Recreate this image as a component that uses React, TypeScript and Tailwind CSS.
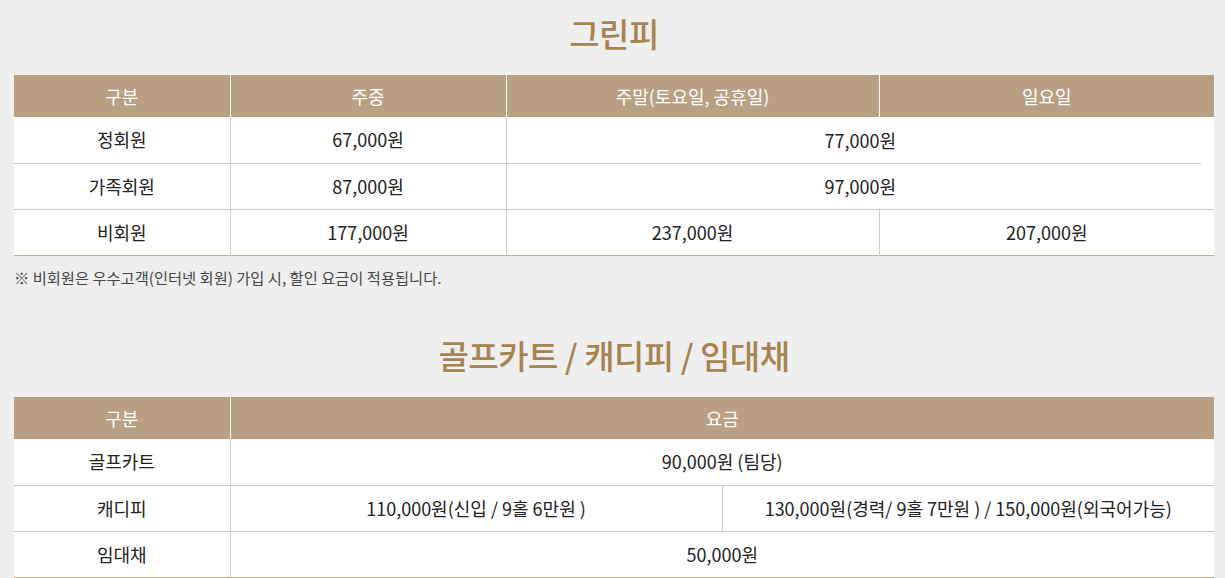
const FONT = "font-['Noto_Sans_CJK_KR','Noto_Sans',sans-serif]";

const th = "h-[42px] border-l border-white bg-[#b9a082] p-0 text-center text-[18px] font-normal text-white first:border-l-0";
const td = "h-[46px] border-l border-t border-[#cccccc] p-0 text-center text-[18px] text-[#222] first:border-l-0";

function Title({ children }: { children: React.ReactNode }) {
  return (
    <h2 className="flex h-[40px] items-center justify-center text-[33px] font-medium tracking-[-0.5px] text-[#a6834f]">
      {children}
    </h2>
  );
}

function GreenFee() {
  return (
    <section className="pt-[14px]">
      <Title>그린피</Title>
      <table className="mt-[21px] w-full table-fixed border-collapse border-b border-b-[#c9ad8a] bg-white">
        <colgroup>
          <col className="w-[216px]" />
          <col className="w-[276px]" />
          <col className="w-[373px]" />
          <col />
        </colgroup>
        <thead>
          <tr>
            <th className={th}>구분</th>
            <th className={th}>주중</th>
            <th className={th}>주말(토요일, 공휴일)</th>
            <th className={th}>일요일</th>
          </tr>
        </thead>
        <tbody>
          <tr>
            <td className={td + " border-t-0"}>정회원</td>
            <td className={td + " border-t-0"}>67,000원</td>
            <td className={td + " border-t-0"} colSpan={2}>77,000원</td>
          </tr>
          <tr>
            <td className={td}>가족회원</td>
            <td className={td}>87,000원</td>
            <td className={td + " border-t-0"} colSpan={2}>
              <div className="relative flex h-[46px] items-center justify-center">
                <span className="absolute left-0 right-[13px] top-0 h-px bg-[#cccccc]" />
                97,000원
              </div>
            </td>
          </tr>
          <tr>
            <td className={td}>비회원</td>
            <td className={td}>177,000원</td>
            <td className={td}>237,000원</td>
            <td className={td}>207,000원</td>
          </tr>
        </tbody>
      </table>
      <p className="mt-[11px] text-[15.3px] leading-[20px] text-[#444]">
        ※ 비회원은 우수고객(인터넷 회원) 가입 시, 할인 요금이 적용됩니다.
      </p>
    </section>
  );
}

function CartFee() {
  return (
    <section className="pt-[49px]">
      <Title>골프카트 / 캐디피 / 임대채</Title>
      <table className="mt-[21px] w-full table-fixed border-collapse border-b border-b-[#c9ad8a] bg-white">
        <colgroup>
          <col className="w-[216px]" />
          <col className="w-[492px]" />
          <col />
        </colgroup>
        <thead>
          <tr>
            <th className={th}>구분</th>
            <th className={th} colSpan={2}>요금</th>
          </tr>
        </thead>
        <tbody>
          <tr>
            <td className={td + " border-t-0"}>골프카트</td>
            <td className={td + " border-t-0"} colSpan={2}>90,000원 (팀당)</td>
          </tr>
          <tr>
            <td className={td}>캐디피</td>
            <td className={td}>110,000원(신입 / 9홀 6만원 )</td>
            <td className={td}>130,000원(경력/ 9홀 7만원 ) / 150,000원(외국어가능)</td>
          </tr>
          <tr>
            <td className={td}>임대채</td>
            <td className={td} colSpan={2}>50,000원</td>
          </tr>
        </tbody>
      </table>
    </section>
  );
}

export default function App() {
  return (
    <div className={`${FONT} h-screen overflow-hidden bg-[#efefef] px-[14px] text-[#222]`}>
      <div className="w-[1200px]">
        <GreenFee />
        <CartFee />
      </div>
    </div>
  );
}
